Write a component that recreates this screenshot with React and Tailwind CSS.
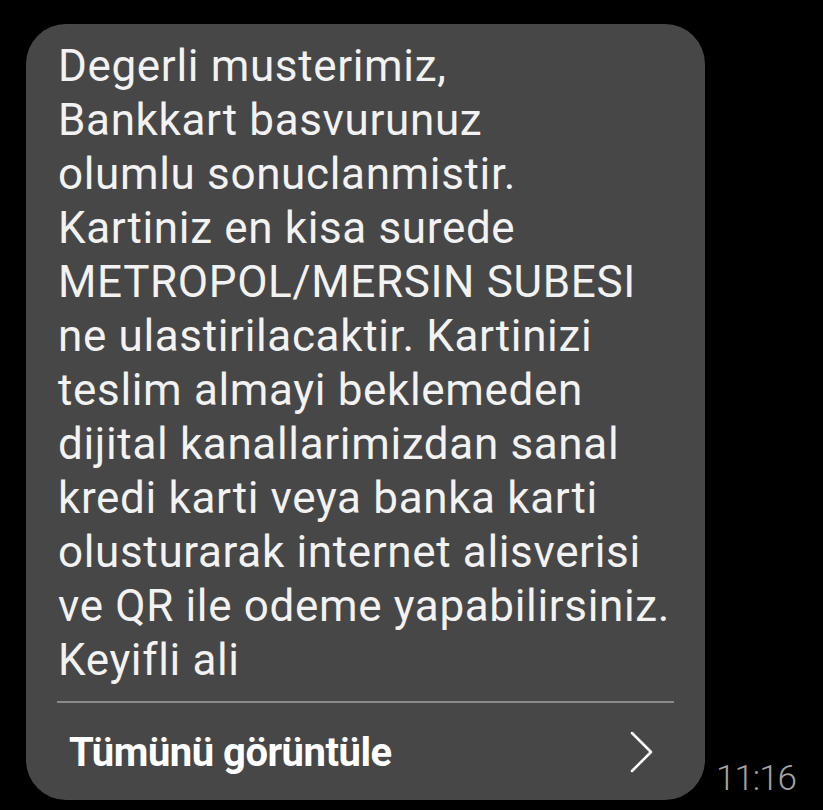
import React from "react";

const LINES = [
	"Degerli musterimiz,",
	"Bankkart basvurunuz",
	"olumlu sonuclanmistir.",
	"Kartiniz en kisa surede",
	"METROPOL/MERSIN SUBESI",
	"ne ulastirilacaktir. Kartinizi",
	"teslim almayi beklemeden",
	"dijital kanallarimizdan sanal",
	"kredi karti veya banka karti",
	"olusturarak internet alisverisi",
	"ve QR ile odeme yapabilirsiniz.",
	"Keyifli ali",
];

export default function App() {
	return (
		<div className="min-h-[810px] w-full bg-black font-['Roboto',sans-serif]">
			<div className="flex items-end pl-[26px] pt-[24px]">
				{/* Message bubble */}
				<div className="w-[679px] h-[776px] rounded-[40px] bg-[#474747] flex flex-col">
					<div className="pl-[32px] pt-[15px] text-[#f2f2f2] text-[44px] leading-[54px] tracking-[0.65px]">
						{LINES.map((line, i) => (
							<div key={i} className="whitespace-nowrap">
								{line}
							</div>
						))}
					</div>
					<div className="mt-[14px] mx-[31px] h-[2px] bg-[#8a8a8a]" />
					<div className="flex-1 flex items-center justify-between pl-[43px] pr-[51px]">
						<span className="text-white text-[40px] font-bold tracking-[-0.5px] leading-none pt-[2px]">
							Tümünü görüntüle
						</span>
						<svg width="24" height="42" viewBox="0 0 24 42" fill="none" className="text-white">
							<polyline
								points="2,2 21,21 2,40"
								stroke="currentColor"
								strokeWidth="2.5"
								strokeLinecap="round"
								strokeLinejoin="round"
							/>
						</svg>
					</div>
				</div>
				<div className="ml-[11px] mb-[4px] text-[#a3a3a3] text-[35px] leading-none font-light tracking-[-1px]">
					11:16
				</div>
			</div>
		</div>
	);
}
